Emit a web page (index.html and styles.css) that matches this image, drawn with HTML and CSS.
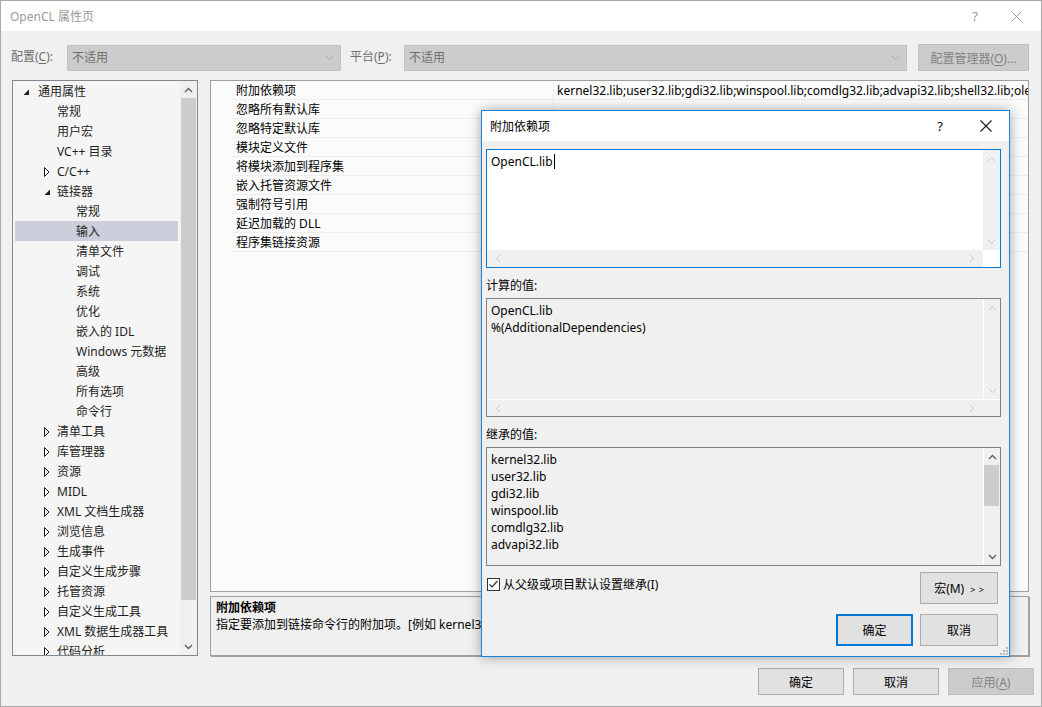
FILE: index.html
```html
<!DOCTYPE html>
<html lang="zh-CN">
<head>
<meta charset="utf-8">
<title>OpenCL 属性页</title>
<link rel="stylesheet" href="styles.css">
</head>
<body>
<div class="window">
  <div class="titlebar">
    <span class="title">OpenCL 属性页</span>
    <span class="tb-help">?</span>
    <span class="tb-close"><svg width="11" height="11" viewBox="0 0 11 11"><path d="M0.5 0.5L10.5 10.5M10.5 0.5L0.5 10.5" stroke="#9a9a9a" stroke-width="1" fill="none"/></svg></span>
  </div>

  <div class="config-row">
    <span class="lbl lbl-config">配置(<u>C</u>):</span>
    <div class="combo combo-config"><span>不适用</span><svg width="9" height="5" viewBox="0 0 9 5"><path d="M0.5 0.5L4.5 4.5L8.5 0.5" stroke="#a9a9a9" fill="none"/></svg></div>
    <span class="lbl lbl-platform">平台(<u>P</u>):</span>
    <div class="combo combo-platform"><span>不适用</span><svg width="9" height="5" viewBox="0 0 9 5"><path d="M0.5 0.5L4.5 4.5L8.5 0.5" stroke="#a9a9a9" fill="none"/></svg></div>
    <button class="btn btn-disabled btn-cfgmgr">配置管理器(<u>O</u>)...</button>
  </div>

  <div class="content">
    <div class="tree">
      <ul class="tree-list">
        <li class="tree-row l0"><span class="twisty"><svg width="7" height="7" viewBox="0 0 7 7"><path d="M6 0.5V6H0.5Z" fill="#1e1e1e"/></svg></span>通用属性</li>
        <li class="tree-row l1"><span class="twisty"></span>常规</li>
        <li class="tree-row l1"><span class="twisty"></span>用户宏</li>
        <li class="tree-row l1"><span class="twisty"></span>VC++ 目录</li>
        <li class="tree-row l1"><span class="twisty"><svg class="col" width="6" height="10" viewBox="0 0 6 10"><path d="M0.5 0.5L5 5L0.5 9.5Z" fill="none" stroke="#1e1e1e"/></svg></span>C/C++</li>
        <li class="tree-row l1"><span class="twisty"><svg class="exp" width="7" height="7" viewBox="0 0 7 7"><path d="M6 0.5V6H0.5Z" fill="#1e1e1e"/></svg></span>链接器</li>
        <li class="tree-row l2"><span class="twisty"></span>常规</li>
        <li class="tree-row l2 sel"><span class="twisty"></span>输入</li>
        <li class="tree-row l2"><span class="twisty"></span>清单文件</li>
        <li class="tree-row l2"><span class="twisty"></span>调试</li>
        <li class="tree-row l2"><span class="twisty"></span>系统</li>
        <li class="tree-row l2"><span class="twisty"></span>优化</li>
        <li class="tree-row l2"><span class="twisty"></span>嵌入的 IDL</li>
        <li class="tree-row l2"><span class="twisty"></span>Windows 元数据</li>
        <li class="tree-row l2"><span class="twisty"></span>高级</li>
        <li class="tree-row l2"><span class="twisty"></span>所有选项</li>
        <li class="tree-row l2"><span class="twisty"></span>命令行</li>
        <li class="tree-row l1"><span class="twisty"><svg class="col" width="6" height="10" viewBox="0 0 6 10"><path d="M0.5 0.5L5 5L0.5 9.5Z" fill="none" stroke="#1e1e1e"/></svg></span>清单工具</li>
        <li class="tree-row l1"><span class="twisty"><svg class="col" width="6" height="10" viewBox="0 0 6 10"><path d="M0.5 0.5L5 5L0.5 9.5Z" fill="none" stroke="#1e1e1e"/></svg></span>库管理器</li>
        <li class="tree-row l1"><span class="twisty"><svg class="col" width="6" height="10" viewBox="0 0 6 10"><path d="M0.5 0.5L5 5L0.5 9.5Z" fill="none" stroke="#1e1e1e"/></svg></span>资源</li>
        <li class="tree-row l1"><span class="twisty"><svg class="col" width="6" height="10" viewBox="0 0 6 10"><path d="M0.5 0.5L5 5L0.5 9.5Z" fill="none" stroke="#1e1e1e"/></svg></span>MIDL</li>
        <li class="tree-row l1"><span class="twisty"><svg class="col" width="6" height="10" viewBox="0 0 6 10"><path d="M0.5 0.5L5 5L0.5 9.5Z" fill="none" stroke="#1e1e1e"/></svg></span>XML 文档生成器</li>
        <li class="tree-row l1"><span class="twisty"><svg class="col" width="6" height="10" viewBox="0 0 6 10"><path d="M0.5 0.5L5 5L0.5 9.5Z" fill="none" stroke="#1e1e1e"/></svg></span>浏览信息</li>
        <li class="tree-row l1"><span class="twisty"><svg class="col" width="6" height="10" viewBox="0 0 6 10"><path d="M0.5 0.5L5 5L0.5 9.5Z" fill="none" stroke="#1e1e1e"/></svg></span>生成事件</li>
        <li class="tree-row l1"><span class="twisty"><svg class="col" width="6" height="10" viewBox="0 0 6 10"><path d="M0.5 0.5L5 5L0.5 9.5Z" fill="none" stroke="#1e1e1e"/></svg></span>自定义生成步骤</li>
        <li class="tree-row l1"><span class="twisty"><svg class="col" width="6" height="10" viewBox="0 0 6 10"><path d="M0.5 0.5L5 5L0.5 9.5Z" fill="none" stroke="#1e1e1e"/></svg></span>托管资源</li>
        <li class="tree-row l1"><span class="twisty"><svg class="col" width="6" height="10" viewBox="0 0 6 10"><path d="M0.5 0.5L5 5L0.5 9.5Z" fill="none" stroke="#1e1e1e"/></svg></span>自定义生成工具</li>
        <li class="tree-row l1"><span class="twisty"><svg class="col" width="6" height="10" viewBox="0 0 6 10"><path d="M0.5 0.5L5 5L0.5 9.5Z" fill="none" stroke="#1e1e1e"/></svg></span>XML 数据生成器工具</li>
        <li class="tree-row l1"><span class="twisty"><svg class="col" width="6" height="10" viewBox="0 0 6 10"><path d="M0.5 0.5L5 5L0.5 9.5Z" fill="none" stroke="#1e1e1e"/></svg></span>代码分析</li>
      </ul>
      <div class="vscroll tree-scroll">
        <span class="arr"><svg width="9" height="6" viewBox="0 0 9 6"><path d="M1 5L4.5 1.5L8 5" stroke="#606060" stroke-width="1.4" fill="none"/></svg></span>
        <div class="track"><div class="thumb tree-thumb"></div></div>
        <span class="arr"><svg width="9" height="6" viewBox="0 0 9 6"><path d="M1 1L4.5 4.5L8 1" stroke="#606060" stroke-width="1.4" fill="none"/></svg></span>
      </div>
    </div>

    <div class="right">
      <div class="grid">
        <div class="grid-row"><span class="gutter"></span><span class="gname">附加依赖项</span><span class="gval">kernel32.lib;user32.lib;gdi32.lib;winspool.lib;comdlg32.lib;advapi32.lib;shell32.lib;ole32.lib;oleaut32.lib;uuid.lib;odbc32.lib;odbccp32.lib;%(AdditionalDependencies)</span></div>
        <div class="grid-row"><span class="gutter"></span><span class="gname">忽略所有默认库</span><span class="gval"></span></div>
        <div class="grid-row"><span class="gutter"></span><span class="gname">忽略特定默认库</span><span class="gval"></span></div>
        <div class="grid-row"><span class="gutter"></span><span class="gname">模块定义文件</span><span class="gval"></span></div>
        <div class="grid-row"><span class="gutter"></span><span class="gname">将模块添加到程序集</span><span class="gval"></span></div>
        <div class="grid-row"><span class="gutter"></span><span class="gname">嵌入托管资源文件</span><span class="gval"></span></div>
        <div class="grid-row"><span class="gutter"></span><span class="gname">强制符号引用</span><span class="gval"></span></div>
        <div class="grid-row"><span class="gutter"></span><span class="gname">延迟加载的 DLL</span><span class="gval"></span></div>
        <div class="grid-row"><span class="gutter"></span><span class="gname">程序集链接资源</span><span class="gval"></span></div>
      </div>
      <div class="desc">
        <div class="desc-title">附加依赖项</div>
        <div class="desc-text">指定要添加到链接命令行的附加项。[例如 kernel32.lib]</div>
      </div>
    </div>
  </div>

  <div class="buttons">
    <button class="btn">确定</button>
    <button class="btn">取消</button>
    <button class="btn btn-disabled">应用(<u>A</u>)</button>
  </div>

  <div class="dialog">
    <div class="dlg-title">
      <span class="title">附加依赖项</span>
      <span class="dlg-help">?</span>
      <span class="dlg-close"><svg width="12" height="12" viewBox="0 0 12 12"><path d="M0.5 0.5L11.5 11.5M11.5 0.5L0.5 11.5" stroke="#1a1a1a" stroke-width="1.1" fill="none"/></svg></span>
    </div>
    <div class="dlg-body">
      <div class="tbox tbox-edit">
        <div class="tbox-text">OpenCL.lib<span class="caret"></span></div>
        <div class="vscroll sb-light">
          <span class="arr"><svg width="9" height="6" viewBox="0 0 9 6"><path d="M1 5L4.5 1.5L8 5" stroke="#c4c4c4" fill="none"/></svg></span>
          <div class="track"></div>
          <span class="arr"><svg width="9" height="6" viewBox="0 0 9 6"><path d="M1 1L4.5 4.5L8 1" stroke="#c4c4c4" fill="none"/></svg></span>
        </div>
        <div class="hscroll">
          <span class="harr"><svg width="6" height="9" viewBox="0 0 6 9"><path d="M5 1L1.5 4.5L5 8" stroke="#c4c4c4" fill="none"/></svg></span>
          <span class="harr"><svg width="6" height="9" viewBox="0 0 6 9"><path d="M1 1L4.5 4.5L1 8" stroke="#c4c4c4" fill="none"/></svg></span>
        </div>
        <div class="corner"></div>
      </div>

      <div class="field-label">计算的值:</div>
      <div class="tbox tbox-ro">
        <div class="tbox-text">OpenCL.lib<br>%(AdditionalDependencies)</div>
        <div class="vscroll sb-sep">
          <span class="arr"><svg width="9" height="6" viewBox="0 0 9 6"><path d="M1 5L4.5 1.5L8 5" stroke="#c4c4c4" fill="none"/></svg></span>
          <div class="track"></div>
          <span class="arr"><svg width="9" height="6" viewBox="0 0 9 6"><path d="M1 1L4.5 4.5L8 1" stroke="#c4c4c4" fill="none"/></svg></span>
        </div>
        <div class="hscroll hs-sep">
          <span class="harr"><svg width="6" height="9" viewBox="0 0 6 9"><path d="M5 1L1.5 4.5L5 8" stroke="#c4c4c4" fill="none"/></svg></span>
          <span class="harr"><svg width="6" height="9" viewBox="0 0 6 9"><path d="M1 1L4.5 4.5L1 8" stroke="#c4c4c4" fill="none"/></svg></span>
        </div>
      </div>

      <div class="field-label">继承的值:</div>
      <div class="tbox tbox-ro tbox-list">
        <div class="tbox-text">kernel32.lib<br>user32.lib<br>gdi32.lib<br>winspool.lib<br>comdlg32.lib<br>advapi32.lib</div>
        <div class="vscroll sb-sep">
          <span class="arr"><svg width="9" height="6" viewBox="0 0 9 6"><path d="M1 5L4.5 1.5L8 5" stroke="#606060" stroke-width="1.4" fill="none"/></svg></span>
          <div class="track"><div class="thumb list-thumb"></div></div>
          <span class="arr"><svg width="9" height="6" viewBox="0 0 9 6"><path d="M1 1L4.5 4.5L8 1" stroke="#606060" stroke-width="1.4" fill="none"/></svg></span>
        </div>
      </div>

      <div class="dlg-row">
        <label class="chk-label"><svg class="chk" width="13" height="13" viewBox="0 0 13 13"><rect x="0.5" y="0.5" width="12" height="12" fill="#fff" stroke="#333"/><path d="M2.5 6.5L5 9L10.5 3" fill="none" stroke="#333" stroke-width="1.2"/></svg>从父级或项目默认设置继承(I)</label>
        <button class="btn dbtn">宏(M)<span class="gg">&gt; &gt;</span></button>
      </div>
      <div class="dlg-row dlg-actions">
        <button class="btn dbtn btn-default">确定</button>
        <button class="btn dbtn">取消</button>
      </div>
    </div>
    <svg class="grip" width="10" height="10" viewBox="0 0 10 10">
      <rect x="8" y="2" width="2" height="2" fill="#b8b8b8"/>
      <rect x="5" y="5" width="2" height="2" fill="#b8b8b8"/>
      <rect x="8" y="5" width="2" height="2" fill="#b8b8b8"/>
      <rect x="2" y="8" width="2" height="2" fill="#b8b8b8"/>
      <rect x="5" y="8" width="2" height="2" fill="#b8b8b8"/>
      <rect x="8" y="8" width="2" height="2" fill="#b8b8b8"/>
    </svg>
  </div>
</div>
</body>
</html>
```

FILE: styles.css
```css
* { box-sizing: border-box; }
html, body { margin: 0; padding: 0; }
body {
  width: 1042px;
  height: 707px;
  overflow: hidden;
  font-family: "Noto Sans", "Noto Sans CJK SC", sans-serif;
  font-size: 12px;
  color: #000;
  background: #f0f0f0;
}
u { text-decoration: underline; text-underline-offset: 2px; }

.window {
  position: relative;
  width: 1042px;
  height: 707px;
  border: 1px solid #a9a9a9;
  background: #f0f0f0;
  display: flex;
  flex-direction: column;
}

/* title bar */
.titlebar {
  height: 30px;
  flex: none;
  background: #fff;
  display: flex;
  align-items: center;
  padding-left: 9px;
  color: #999;
}
.titlebar .title { flex: 1; }
.tb-help { width: 32px; height: 30px; display: flex; align-items: center; justify-content: center; color: #999; font-size: 13px; }
.tb-close { width: 50px; height: 30px; display: flex; align-items: center; justify-content: center; }

/* config row */
.config-row {
  flex: none;
  display: flex;
  align-items: center;
  height: 27px;
  margin-top: 13px;
  padding-left: 10px;
}
.lbl { color: #6d6d6d; white-space: nowrap; line-height: 16px; padding-bottom: 1px; }
.lbl-config { width: 56px; }
.lbl-platform { margin-left: 9px; width: 54px; }
.combo {
  height: 26px;
  background: #cccccc;
  border: 1px solid #c2c2c2;
  display: flex;
  align-items: center;
  justify-content: space-between;
  padding: 0 6px 1px 4px;
  color: #6d6d6d;
}
.combo-config { width: 274px; }
.combo-platform { width: 503px; }

.btn {
  font: inherit;
  font-size: 12px;
  color: #000;
  background: #e1e1e1;
  border: 1px solid #adadad;
  padding: 0;
  width: 86px;
  height: 27px;
}
.btn-disabled { background: #cccccc; border-color: #bfbfbf; color: #838383; }
.btn-cfgmgr { margin-left: 11px; width: 111px; height: 27px; }

/* content */
.content {
  flex: none;
  display: flex;
  margin-top: 9px;
  height: 576px;
  padding-left: 11px;
  gap: 12px;
}
.tree {
  width: 186px;
  border: 1px solid #828790;
  background: #f5f5f5;
  display: flex;
  overflow: hidden;
}
.tree-list {
  flex: 1;
  list-style: none;
  margin: 0;
  padding: 0 2px;
  overflow: hidden;
}
.tree-row {
  height: 20px;
  display: flex;
  align-items: center;
  white-space: nowrap;
  color: #1e1e1e;
  line-height: 18px;
  padding-top: 2px;
}
.tree-row.sel { background: #cccedb; }
.l0 { padding-left: 8px; }
.l1 { padding-left: 27px; }
.l2 { padding-left: 46px; }
.twisty { width: 15px; flex: none; display: flex; align-items: center; height: 18px; }
.twisty svg { display: block; }
.twisty .col { margin-left: 2px; margin-top: 0; }
.twisty .exp { margin-left: 2px; margin-top: 1px; }
.l0 .twisty svg { margin-top: 1px; }

.vscroll {
  width: 17px;
  flex: none;
  display: flex;
  flex-direction: column;
  background: #f0f0f0;
}
.vscroll .arr {
  height: 17px;
  flex: none;
  display: flex;
  align-items: center;
  justify-content: center;
}
.vscroll .track { flex: 1; position: relative; }
.thumb { background: #cdcdcd; margin: 0 1px; }
.tree-thumb { height: 502px; }

/* right side */
.right {
  width: 819px;
  display: flex;
  flex-direction: column;
  gap: 4px;
}
.grid {
  flex: 1;
  border: 1px solid #a0a0a0;
  background: #fbfbfb;
  overflow: hidden;
}
.grid-row {
  height: 19px;
  display: flex;
  white-space: nowrap;
}
.gutter { width: 21px; flex: none; }
.gname {
  width: 321px;
  flex: none;
  padding-left: 4px;
  padding-top: 2px;
  line-height: 16px;
  border-bottom: 1px solid #eeeeee;
}
.gval {
  flex: 1;
  border-left: 1px solid #eeeeee;
  border-bottom: 1px solid #eeeeee;
  padding-left: 3px;
  padding-top: 2px;
  line-height: 16px;
  overflow: hidden;
}
.desc {
  height: 60px;
  flex: none;
  border: 1px solid #a0a0a0;
  box-shadow: 1px 1px 0 #a0a0a0;
  padding: 2px 5px;
  line-height: 17px;
  background: #f0f0f0;
}
.desc-title { font-weight: bold; }

/* bottom buttons */
.buttons {
  flex: none;
  display: flex;
  justify-content: flex-end;
  gap: 9px;
  margin-top: 12px;
  padding-right: 7px;
}

/* modal dialog */
.dialog {
  position: absolute;
  left: 480px;
  top: 109px;
  width: 529px;
  height: 547px;
  border: 1px solid #1883d7;
  background: #f0f0f0;
  box-shadow: 0 0 12px rgba(0, 0, 0, 0.35);
  display: flex;
  flex-direction: column;
}
.dlg-title {
  height: 30px;
  flex: none;
  background: #fff;
  display: flex;
  align-items: center;
  padding-left: 8px;
}
.dlg-title .title { flex: 1; }
.dlg-help, .dlg-close { width: 46px; height: 30px; display: flex; align-items: center; justify-content: center; }
.dlg-help { font-size: 13px; }
.dlg-body {
  flex: 1;
  display: flex;
  flex-direction: column;
  padding: 8px 8px 0 4px;
}
.tbox {
  height: 119px;
  flex: none;
  border: 1px solid #828282;
  display: grid;
  grid-template-columns: 1fr 17px;
  grid-template-rows: 1fr 17px;
  background: #f0f0f0;
}
.tbox-edit { border-color: #0078d7; background: #fff; }
.tbox-list { grid-template-rows: 1fr; }
.tbox-text {
  padding: 3px 4px;
  line-height: 17px;
  white-space: nowrap;
  overflow: hidden;
}
.caret {
  display: inline-block;
  width: 1px;
  height: 15px;
  background: #000;
  vertical-align: -3px;
  margin-left: 1px;
}
.sb-sep { border-left: 1px solid #fff; }
.hscroll {
  display: flex;
  align-items: center;
  justify-content: space-between;
  background: #f0f0f0;
  padding: 0 8px;
}
.hs-sep { border-top: 1px solid #fff; grid-column: 1 / 3; padding-right: 25px; }
.harr { display: flex; align-items: center; }
.corner { background: #fff; }
.list-thumb { height: 41px; margin: 0 1px 0 0; }

.field-label {
  height: 30px;
  flex: none;
  display: flex;
  align-items: flex-end;
  padding-bottom: 4px;
  line-height: 16px;
}
.dlg-row {
  flex: none;
  display: flex;
  justify-content: space-between;
  align-items: flex-start;
  margin-top: 6px;
  padding-right: 3px;
}
.chk-label { display: flex; align-items: center; gap: 3px; margin-top: 4px; margin-left: 1px; line-height: 17px; }
.chk { display: block; }
.dbtn { width: 78px; height: 32px; }
.gg { font-size: 9px; margin-left: 6px; word-spacing: 1px; }
.dlg-actions { justify-content: flex-end; gap: 7px; margin-top: 10px; }
.btn-default { width: 77px; border: 2px solid #0078d7; }
.grip { position: absolute; right: 1px; bottom: 1px; }
```
